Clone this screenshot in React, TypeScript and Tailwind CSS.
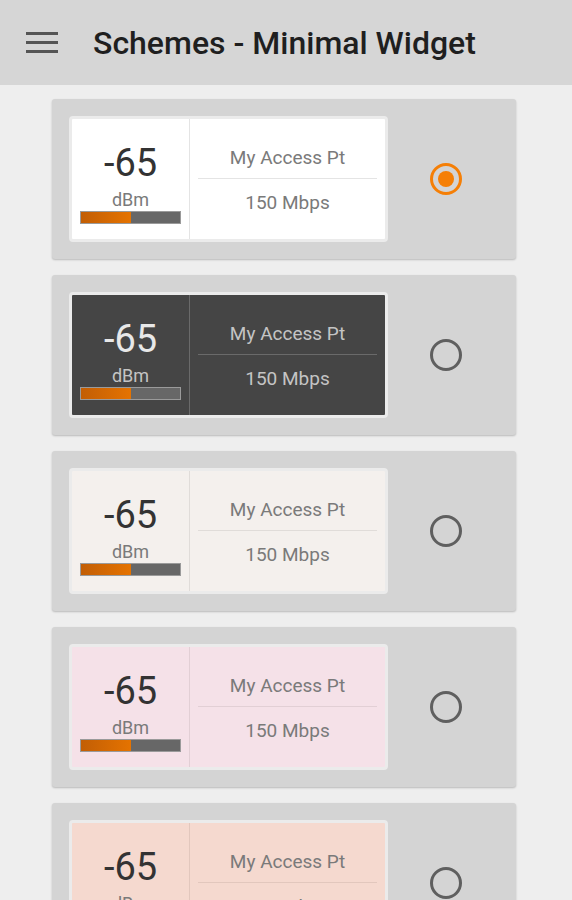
const schemes = [
  { bg: "bg-white", big: "text-[#333333]", small: "text-[#7a7a7a]", line: "bg-[#e4e4e4]", selected: true },
  { bg: "bg-[#454545]", big: "text-[#e8e8e8]", small: "text-[#c4c4c4]", line: "bg-[#6a6a6a]", selected: false },
  { bg: "bg-[#f4f0ed]", big: "text-[#333333]", small: "text-[#7a7a7a]", line: "bg-[#e0dcd9]", selected: false },
  { bg: "bg-[#f5e1e8]", big: "text-[#333333]", small: "text-[#7a7a7a]", line: "bg-[#e2cfd5]", selected: false },
  { bg: "bg-[#f5d9cf]", big: "text-[#333333]", small: "text-[#7a7a7a]", line: "bg-[#e2c7bd]", selected: false },
];

type Scheme = (typeof schemes)[number];

function Widget({ s }: { s: Scheme }) {
  return (
    <div className={`flex h-[126px] w-[319px] rounded-[4px] border-[3px] border-[#ebebeb] ${s.bg}`}>
      <div className="flex w-[117px] flex-col items-center px-2 pt-[25px]">
        <div className={`text-[38px] leading-none ${s.big}`}>-65</div>
        <div className={`mt-[9px] text-[18px] leading-none ${s.small}`}>dBm</div>
        <div className="mt-[2px] flex h-[13px] w-[101px] border border-[#9a9a9a]">
          <div className="w-1/2 bg-gradient-to-r from-[#c25e05] to-[#e57300]" />
          <div className="w-1/2 bg-[#676767]" />
        </div>
      </div>
      <div className={`w-px ${s.line}`} />
      <div className="flex flex-1 flex-col px-2 pt-[29px]">
        <div className={`text-center text-[19px] leading-none ${s.small}`}>My Access Pt</div>
        <div className={`mt-[11px] h-px ${s.line}`} />
        <div className={`mt-[14px] text-center text-[19px] leading-none ${s.small}`}>150 Mbps</div>
      </div>
    </div>
  );
}

function Radio({ on }: { on: boolean }) {
  return on ? (
    <div className="flex h-8 w-8 items-center justify-center rounded-full border-[3px] border-[#f57f06]">
      <div className="h-4 w-4 rounded-full bg-[#f57f06]" />
    </div>
  ) : (
    <div className="h-8 w-8 rounded-full border-[3px] border-[#5f5f5f]" />
  );
}

export default function App() {
  return (
    <div className="flex h-[900px] w-[572px] flex-col overflow-hidden bg-[#eeeeee] font-['Roboto',sans-serif]">
      <header className="flex h-[85px] shrink-0 items-center bg-[#d6d6d6] pl-[26px]">
        <div className="flex w-8 flex-col gap-[6px]">
          <span className="h-[3px] bg-[#555555]" />
          <span className="h-[3px] bg-[#555555]" />
          <span className="h-[3px] bg-[#555555]" />
        </div>
        <h1 className="ml-[35px] text-[32px] font-medium leading-none text-[#1f1f1f]">Schemes - Minimal Widget</h1>
      </header>
      <div className="flex flex-col gap-4 pl-[52px] pt-[14px]">
        {schemes.map((s, i) => (
          <div
            key={i}
            className="flex h-[160px] w-[464px] shrink-0 items-center rounded-[3px] bg-[#d4d4d4] pl-[17px] shadow-[0_1px_2px_rgba(0,0,0,0.22)]"
          >
            <Widget s={s} />
            <div className="ml-[42px]">
              <Radio on={s.selected} />
            </div>
          </div>
        ))}
      </div>
    </div>
  );
}
